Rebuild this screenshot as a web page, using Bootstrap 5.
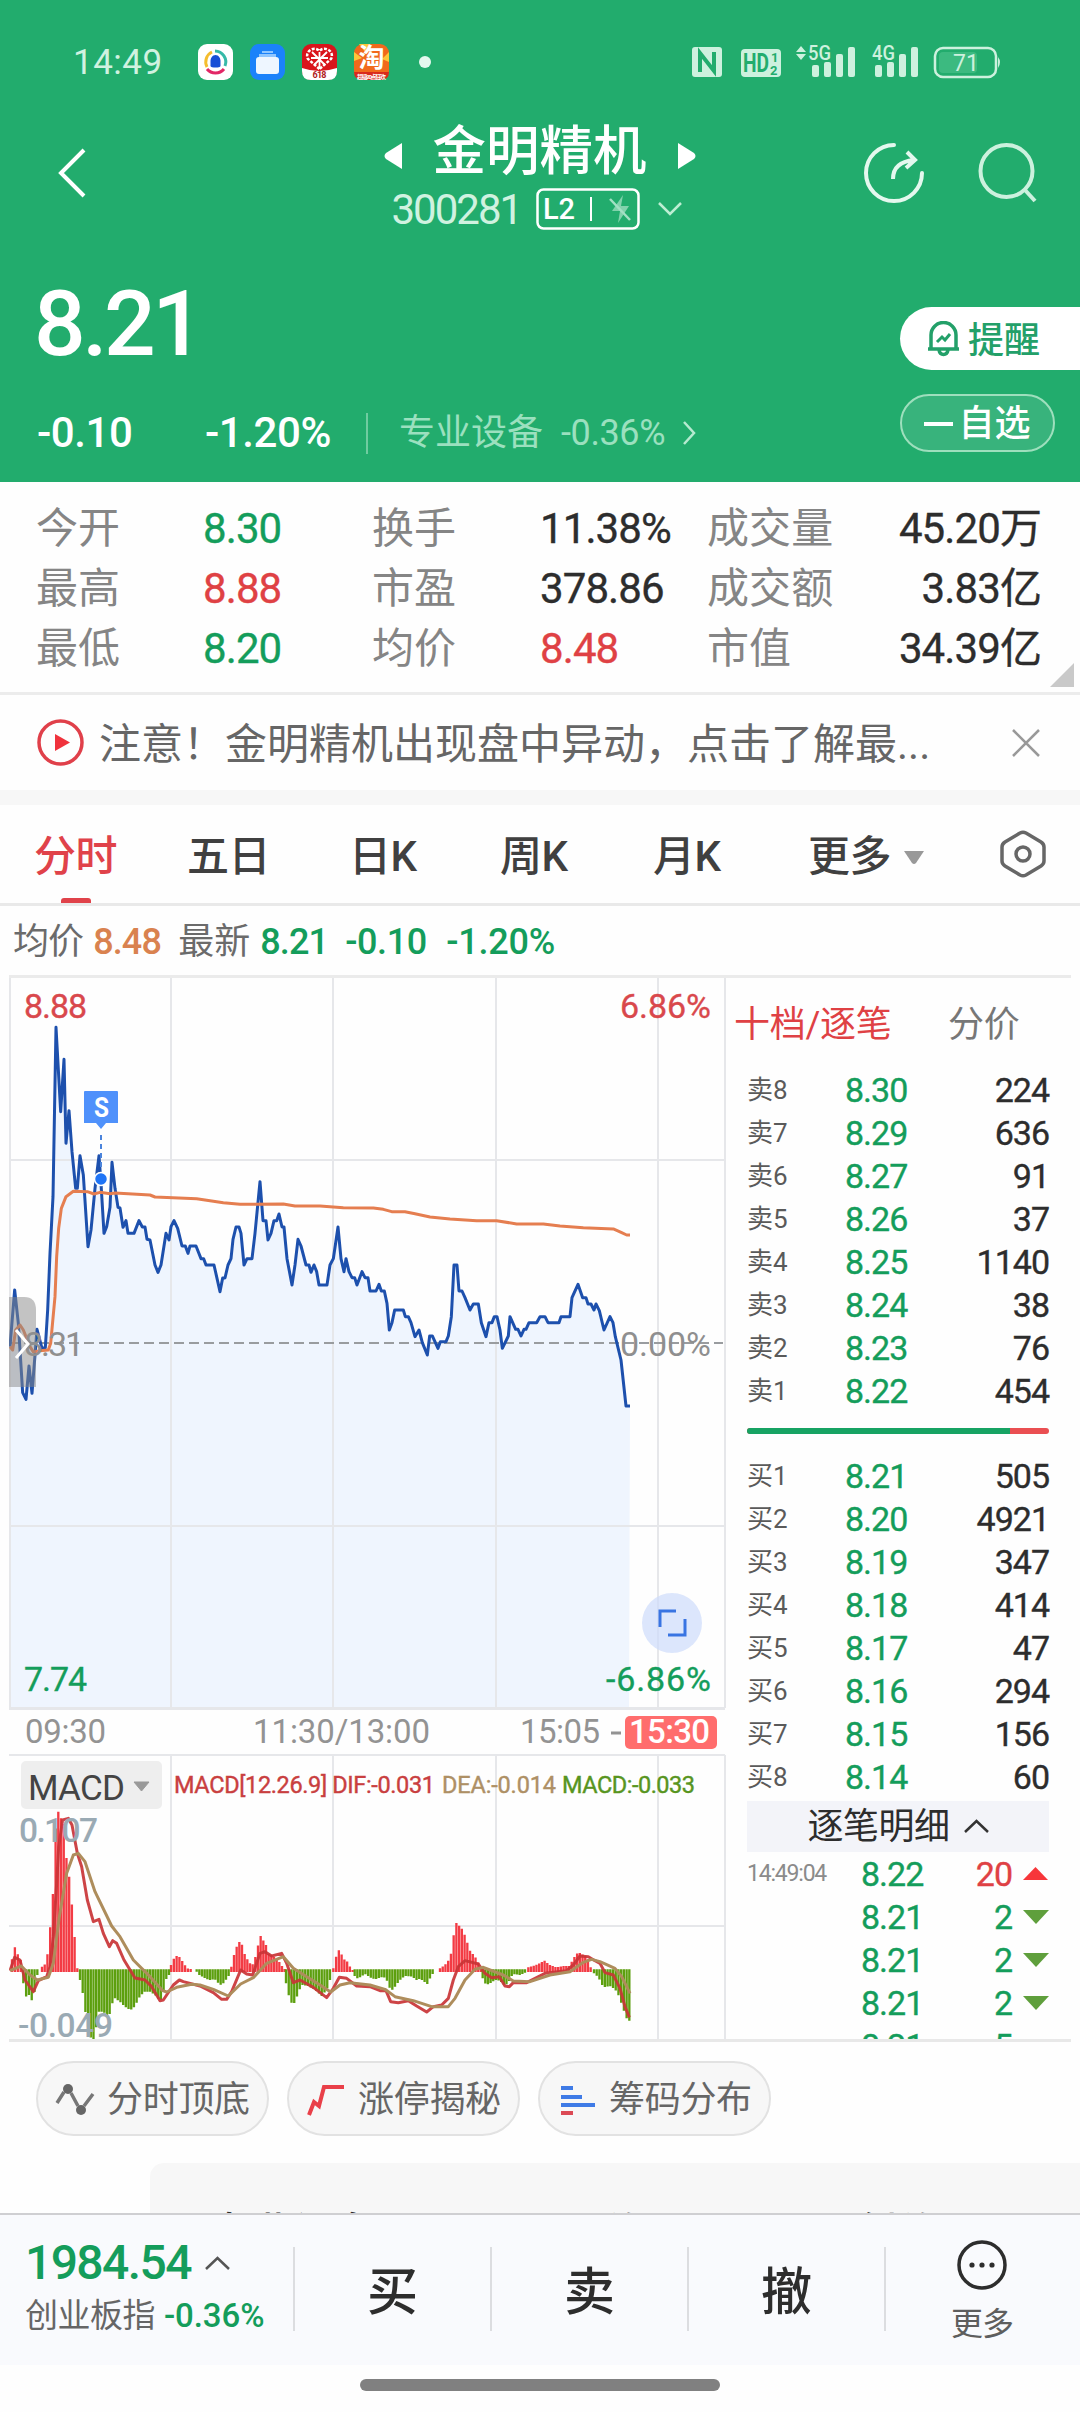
<!DOCTYPE html>
<html lang="zh-CN">
<head>
<meta charset="utf-8">
<meta name="viewport" content="width=device-width, initial-scale=1">
<title>金明精机 300281</title>
<link rel="stylesheet" href="https://cdn.jsdelivr.net/npm/bootstrap@5.3.0/dist/css/bootstrap.min.css">
<style>
body{width:1080px;height:2412px;overflow:hidden;background:#fefefe;font-family:Roboto,"Noto Sans CJK SC",sans-serif;color:#2d2d2d;line-height:1;letter-spacing:-1px}
svg{display:block;flex:none}
svg text{font-family:Roboto,"Noto Sans CJK SC",sans-serif;letter-spacing:0}
.cjk{letter-spacing:0}
.up{color:#df4144}.down{color:#149d5b}
.quote-head{height:482px;background:#22ac6d;color:#fff}
.status{height:100px;padding:24px 78px 0 73px}
.status .clock{font-size:35px;width:93px;color:#d0f2e0;letter-spacing:.5px}
.title-row{height:150px;padding:0 42px 0 56px}
.stock-name{font-size:53.5px;letter-spacing:0;line-height:54px;font-weight:500}
.stock-code{font-size:42px;letter-spacing:-2px;color:#d0f2e0}
.price-row{height:232px;padding-left:37px}
.big-price{font-size:91px;letter-spacing:-3.5px;font-weight:500;line-height:90px;padding-top:29px;margin-left:-3px}
.chg{font-size:42px;letter-spacing:-.4px;font-weight:500}
.sector{color:#9be0bf;font-size:36px}
.vline{width:2px;height:41px;background:#6fcca0}
.pill-alert{width:180px;height:63px;margin-top:57px;border-radius:32px 0 0 32px;background:#fff;color:#23a069;font-size:36px;padding-left:27px;font-weight:500}
.pill-own{width:155px;height:58px;margin-top:24px;border-radius:29px;border:2px solid #9edfbd;background:#38b37c;font-size:36px;font-weight:500;padding-top:2px}
.stats{height:210px;padding:17px 38px 0 36px}
.stat-grid{display:grid;grid-template-columns:167px 169px 168px 167px 334px;grid-auto-rows:60px;align-items:center;font-size:42px}
.stat-grid b{font-weight:400;letter-spacing:-.9px;font-size:42px;-webkit-text-stroke:.35px currentColor}
.stat-grid .name{color:#858585;letter-spacing:.1px}
.corner{right:6px;bottom:5px;width:24px;height:24px;background:#c9c9c9;clip-path:polygon(100% 0,100% 100%,0 100%)}
.notice{height:98px;border-top:3px solid #ececec;padding:0 40px 0 37px;color:#666;font-size:42px;letter-spacing:0}
.tabs{height:101px;border-bottom:3px solid #e9e9e9;font-size:42px;color:#404040;padding:6px 34px 0 34px}
.tabs .tab{letter-spacing:-.5px;height:92px;display:flex;align-items:center;font-weight:500}
.tabs .on{color:#e0424a}
.tabs .on::after{content:"";position:absolute;left:27px;bottom:0;width:30px;height:5px;border-radius:3px 3px 0 0;background:#e0424a}
.legend-row{height:69px;padding:2px 0 0 13px;font-size:36px;color:#6b6b6b;letter-spacing:-.9px}
.legend-row span+span{margin-left:10px}
.main-area{height:1067px;margin-left:9px;width:1062px;border-top:3px solid #ebebeb;border-bottom:3px solid #e8e8e8}
.charts{width:717px}
.book{width:345px;overflow:hidden;padding:0 22px 0 21px}
.book-tabs{height:93px;margin-left:-13px;font-size:36px;letter-spacing:-.3px}
.bk{height:43px;font-size:34px;font-weight:400;-webkit-text-stroke:.35px currentColor}
.bk .lv{width:98px;font-size:26px;color:#5a5a5a;letter-spacing:0;-webkit-text-stroke:0}
.bk .px{width:80px}
.bk .tm{width:114px;font-size:23px;color:#8b8b8b;letter-spacing:-1.2px;-webkit-text-stroke:0}
.ratio{height:6px;border-radius:3px;overflow:hidden;background:#ea4f52}
.ratio i{display:block;height:100%;background:#17a363}
.detail-head{height:51px;background:#f3f4f9;font-size:36px;letter-spacing:-.5px}
.chips{height:121px;padding:19px 36px 0;gap:18px}
.chip{width:233px;height:75px;border-radius:38px;border:2px solid #e2e2e2;background:#f7f7f7;font-size:36px;color:#666;padding:2px 0 0 17px;letter-spacing:-.3px}
.peek{height:50px;margin-left:150px;background:#f7f7f7;border-radius:14px 0 0 0;overflow:hidden;font-size:42px;letter-spacing:0;font-weight:500;padding:46px 0 0 60px;line-height:50px}
.trade-bar{height:152px;background:#f9fafd;border-top:2px solid #cfcfd2}
.index-box{width:293px;padding:24px 0 0 25px}
.deal{width:197px;height:84px;border-left:2px solid #dcdde0;font-size:51px;letter-spacing:0;font-weight:500;padding-top:7px}
.more-box{width:194px;height:84px;border-left:2px solid #dcdde0;font-size:32px;color:#5e5e5e}
.home{height:40px}
.home i{width:360px;height:12px;border-radius:6px;background:#808080}
</style>
</head>
<body>
<header class="quote-head">
 <div class="status d-flex align-items-center">
  <span class="clock">14:49</span>
  <div class="d-flex ms-4 ps-2" style="gap:17px">
   <svg width="35" height="36" viewBox="0 0 35 36"><rect width="35" height="36" rx="9" fill="#fff"/><g fill="none" stroke-width="3"><path d="M9 23a11 11 0 0 1 5-15" stroke="#f5bd2e"/><path d="M17 7a11 11 0 0 1 10 15" stroke="#36b9a8"/><path d="M9 25a11 11 0 0 0 17 0" stroke="#e22766"/></g><path d="M17.500 11c3 0 5 3 5 6v5c0 2-10 2-10 0v-5c0-3 2-6 5-6z" fill="#174fd6"/></svg>
   <svg width="35" height="36" viewBox="0 0 35 36"><rect width="35" height="36" rx="9" fill="#1b82fa"/><path d="M12 7h11v2H12zM9 10h17v3H9z" fill="#8fc6ff"/><rect x="6" y="13" width="23" height="17" rx="3" fill="#eef6ff"/></svg>
   <svg width="35" height="36" viewBox="0 0 35 36"><rect width="35" height="36" rx="9" fill="#d9141b"/><path d="M0 24q17 6 35 0v3q0 9-9 9H9q-9 0-9-9z" fill="#fff"/><path d="M17.500 25L6 15C2 8 12 1 17.500 7 23 1 33 8 29 15z" fill="none" stroke="#fff" stroke-width="2.500" stroke-dasharray="3 1.500"/><path d="M10 8l13 13M25 8L12 21M9 14h17M17.500 8v15" stroke="#fff" stroke-width="1.800"/><text x="10.500" y="34" font-size="9" font-weight="700" fill="#b01b1b" textLength="14">618</text></svg>
   <svg width="35" height="36" viewBox="0 0 35 36"><rect width="35" height="36" rx="9" fill="#f1691c"/><path d="M0 8l8 6-8 3zM35 8l-7 7 7 3zM5 0l6 8 5-8z" fill="#ffc53a"/><text x="4.500" y="22.500" font-size="26" font-weight="700" fill="#fff" textLength="26">淘</text><path d="M0 28h35q0 8-9 8H9q-9 0-9-8z" fill="#d92a1c"/><text x="3" y="34.500" font-size="6" font-weight="700" fill="#fff" textLength="29">超级20点狂欢</text></svg>
  </div>
  <svg class="ms-auto me-auto" width="12" height="12" style="transform:translateX(-116px)"><circle cx="6" cy="6" r="6" fill="#e4f8ee"/></svg>
  <svg width="310" height="40" viewBox="692 42 310 40" fill="#cdf1de">
   <rect x="692" y="47" width="30" height="30" rx="3"/><path d="M700 72V53l14 18V52" fill="none" stroke="#22ac6d" stroke-width="4"/>
   <rect x="741" y="49" width="40" height="28" rx="4"/><text x="743" y="72" font-size="25" font-weight="700" fill="#22ac6d" textLength="26" lengthAdjust="spacingAndGlyphs">HD</text><text x="771" y="62" font-size="13" font-weight="700" fill="#22ac6d">1</text><text x="770" y="75" font-size="13" font-weight="700" fill="#22ac6d">2</text>
   <path d="M796 52l5-6 5 6zM796 54h10l-5 6z"/>
   <text x="808" y="60" font-size="20" font-weight="500" textLength="23" lengthAdjust="spacingAndGlyphs">5G</text>
   <text x="872" y="60" font-size="20" font-weight="500" textLength="23" lengthAdjust="spacingAndGlyphs">4G</text>
   <g id="sig"><rect x="812" y="65" width="7" height="12" rx="2"/><rect x="824" y="62" width="7" height="15" rx="2"/><rect x="836" y="54" width="7" height="23" rx="2"/><rect x="848" y="47" width="7" height="30" rx="2"/></g><use href="#sig" x="63"/>
   <rect x="935" y="48" width="61" height="29" rx="8" fill="none" stroke="#cdf1de" stroke-width="2.500"/><rect x="939" y="52" width="38" height="21" rx="4" fill="#3cba80"/><path d="M998 57q4 5 0 11z"/><text x="953" y="71" font-size="23" textLength="26">71</text>
  </svg>
 </div>
 <div class="title-row d-flex justify-content-between">
  <svg width="32" height="50" class="align-self-start" style="margin-top:48px"><path d="M28 2L5 25l23 23" fill="none" stroke="#fff" stroke-width="4"/></svg>
  <div style="width:312px;margin-left:127px;padding-top:25px">
   <div class="d-flex align-items-center justify-content-center">
    <svg width="19" height="28" style="margin-top:7px"><path d="M18 1v26L2 17q-3-3 0-6z" fill="#fff"/></svg>
    <span class="stock-name mx-auto">金明精机</span>
    <svg width="19" height="28" style="margin-top:7px"><path d="M1 1v26l16-10q3-3 0-6z" fill="#fff"/></svg>
   </div>
   <div class="d-flex align-items-center" style="margin:8px 0 0 8px">
    <span class="stock-code" style="width:144px;padding-top:2px">300281</span>
    <svg width="104" height="42" viewBox="0 0 104 42"><rect x="1.500" y="1.500" width="101" height="39" rx="6" fill="none" stroke="#fff" stroke-width="2.500"/><text x="7" y="31" font-size="29" font-weight="500" fill="#fff" textLength="32">L2</text><path d="M55 9v24" stroke="#fff" stroke-width="2"/><path d="M87 7L76 23h8l-2 12 11-17h-8z" fill="#82d2ac"/><path d="M74 11l20 21" stroke="#a3e0c4" stroke-width="2.500"/></svg>
    <svg width="26" height="16" style="margin-left:17px"><path d="M2 2l11 11L24 2" fill="none" stroke="#bdeed3" stroke-width="2.500"/></svg>
   </div>
  </div>
  <div class="d-flex" style="gap:54px;padding-top:43px">
   <svg width="60" height="60" fill="none" stroke="#e4f8ee" stroke-width="4"><path d="M30 2A28 28 0 1 0 58 30" stroke-linecap="round"/><path d="M29 36q0-17 21-19M43 9l8 8-9 8"/></svg>
   <svg width="60" height="60" fill="none" stroke="#ccf1de" stroke-width="4"><circle cx="28.500" cy="28" r="26"/><path d="M47 47l10 11"/></svg>
  </div>
 </div>
 <div class="price-row d-flex justify-content-between">
  <div>
   <div class="big-price">8.21</div>
   <div class="d-flex align-items-center" style="margin-top:43px">
    <span class="chg" style="width:168px">-0.10</span><span class="chg" style="width:161px">-1.20%</span>
    <i class="vline"></i>
    <span class="sector cjk text-nowrap" style="width:193px;padding-left:31px">专业设备</span>
    <span class="sector" style="width:121px;letter-spacing:-.4px">-0.36%</span>
    <svg width="14" height="26"><path d="M2 2l10 11L2 24" fill="none" stroke="#b6ead0" stroke-width="2.500"/></svg>
   </div>
  </div>
  <div>
   <div class="pill-alert d-flex align-items-center">
    <svg width="33" height="36" viewBox="0 0 33 36" fill="none" stroke="#23a069" stroke-width="3.500"><path d="M4 28V14a12.500 12.500 0 0 1 25 0v14M1 28h31M12 29c1 6 8 6 9 0"/><path d="M10 21l5-5 3 3 5-6" stroke-width="3"/></svg>
    <span class="cjk ms-2 pt-1">提醒</span>
   </div>
   <div class="pill-own cjk d-flex align-items-center justify-content-center"><svg width="30" height="6" class="me-1"><path d="M0 3h29" stroke="#fff" stroke-width="4"/></svg>自选</div>
  </div>
 </div>
</header>

<section class="stats position-relative">
 <div class="stat-grid">
  <span class="name">今开</span><b class="down">8.30</b><span class="name">换手</span><b>11.38%</b><div class="d-flex justify-content-between"><span class="name">成交量</span><b>45.20万</b></div>
  <span class="name">最高</span><b class="up">8.88</b><span class="name">市盈</span><b>378.86</b><div class="d-flex justify-content-between"><span class="name">成交额</span><b>3.83亿</b></div>
  <span class="name">最低</span><b class="down">8.20</b><span class="name">均价</span><b class="up">8.48</b><div class="d-flex justify-content-between"><span class="name">市值</span><b>34.39亿</b></div>
 </div>
 <i class="corner position-absolute"></i>
</section>

<section class="notice d-flex align-items-center">
 <svg width="47" height="47" viewBox="0 0 47 47"><circle cx="23.500" cy="23.500" r="21.500" fill="none" stroke="#e0404a" stroke-width="3.500"/><path d="M18 15l15 8.500L18 32z" fill="#f0323c"/></svg>
 <span class="text-nowrap pt-1" style="margin-left:15px">注意！金明精机出现盘中异动，点击了解最...</span>
 <svg class="ms-auto" width="28" height="28"><path d="M1 1l26 26M27 1L1 27" stroke="#999" stroke-width="2.500"/></svg>
</section>
<div style="height:15px;background:#f7f7f7"></div>

<nav class="tabs d-flex">
 <div class="tab on position-relative" style="width:153px">分时</div><div class="tab" style="width:162px">五日</div><div class="tab" style="width:151px">日K</div><div class="tab" style="width:153px">周K</div><div class="tab" style="width:155px">月K</div>
 <div class="tab">更多<svg style="margin-left:12px" width="22" height="15"><path d="M1 1h20L13 13q-2 2-4 0z" fill="#999"/></svg></div>
 <div class="tab ms-auto"><svg width="46" height="48" viewBox="0 0 46 48" fill="none" stroke="#666" stroke-width="3.500" style="margin-top:-6px"><path d="M20 3q3-1.500 6 0l15 9q3 2 3 5v14q0 3-3 5l-15 9q-3 1.500-6 0L5 36q-3-2-3-5V17q0-3 3-5z"/><circle cx="23" cy="24" r="7"/></svg></div>
</nav>

<div class="legend-row d-flex align-items-center">
 <span>均价</span><span style="color:#d9824f;width:75px;font-weight:500">8.48</span><span class="cjk">最新</span><span class="down" style="font-weight:500;width:75px">8.21</span><span class="down" style="font-weight:500;width:91px;letter-spacing:-.4px">-0.10</span><span class="down" style="font-weight:500;letter-spacing:-.2px">-1.20%</span>
</div>

<main class="main-area d-flex">
 <div class="charts">
  <svg width="717" height="1061" viewBox="9 978 717 1061" id="chart">
   <g transform="translate(0 970) scale(.33333)">
    <path id="fill" fill="#eff5fe"/>
   </g>
   <g stroke="#e6e7ea" stroke-width="2" fill="none">
    <path d="M10 978V1708M171 978V1708M333 978V1708M496 978V1708M658 978V1708M725 978V1708M9 1160H725M9 1526H725"/>
    <path d="M9 1708.500H725" stroke-width="3"/><path d="M9 1755H725M9 1926H725M171 1755V2042M333 1755V2042M496 1755V2042M658 1755V2042M725 1755V2042"/>
   </g>
   <path d="M9 1343H723" stroke="#999c9f" stroke-width="2" stroke-dasharray="10 5"/>
   <g transform="translate(0 970) scale(.33333)" fill="none" stroke-linejoin="round">
    <path id="price" stroke="#1d50ad" stroke-width="9"/>
    <path d="M30 1130L38 1140 47 1080 60 1065 70 1080 90 1130 100 1146 120 1142 145 1140 152 1120 165 980 170 860 176 775 184 715 198 680 220 664 262 665 282 672 300 667 330 671 345 669 450 675 465 681 590 686 670 698 720 703 850 702 885 708 960 708 1030 713 1120 714 1150 718 1175 725 1215 725 1245 731 1290 741 1350 747 1430 752 1490 752 1550 762 1630 762 1680 768 1750 773 1840 777 1865 788 1880 795 1890 795" stroke="#e57e50" stroke-width="9"/>
   </g>
   <path d="M9 1297h15q12 0 12 13v77H9z" fill="#888" fill-opacity=".5"/>
   <path d="M101 1135V1170" stroke="#4b84dc" stroke-width="2" stroke-dasharray="5 4"/>
   <circle cx="101" cy="1179" r="6.500" fill="#1f74f6" stroke="#fff" stroke-width="1.500"/>
   <path d="M85 1091h32q1 0 1 1v31h-12l-5 6-5-6H84v-31q0-1 1-1z" fill="#4f91fb"/>
   <text x="94" y="1117" font-size="28" font-weight="700" fill="#fff" textLength="15" lengthAdjust="spacingAndGlyphs">S</text>
   <g font-size="34" stroke-width=".35">
    <text x="24" y="1018" fill="#d9484c" stroke="#d9484c" textLength="63">8.88</text><text x="620" y="1018" fill="#d9484c" stroke="#d9484c" textLength="91">6.86%</text>
    <g fill="#8f8f8f"><text x="24" y="1356" textLength="60">8.31</text><text x="620" y="1356" textLength="91">0.00%</text></g>
    <text x="24" y="1691" fill="#149d5b" stroke="#149d5b" textLength="63">7.74</text><text x="606" y="1691" fill="#149d5b" stroke="#149d5b" textLength="105">-6.86%</text>
   </g>
   <path d="M16 1330l12 14-12 14" fill="none" stroke="#fff" stroke-width="3"/>
   <circle cx="672" cy="1623" r="30" fill="#cddcfb" fill-opacity=".7"/>
   <path d="M660 1627v-16h16M668 1635h17v-16" fill="none" stroke="#3974e2" stroke-width="3"/>
   <g font-size="33" fill="#939393"><text x="25" y="1743" textLength="81">09:30</text><text x="253" y="1743" textLength="177">11:30/13:00</text><text x="520" y="1743" textLength="80">15:05</text><path d="M611 1733h10" stroke="#939393" stroke-width="3"/></g>
   <rect x="625" y="1716" width="92" height="33" rx="5" fill="#ff6d6d"/><text x="629" y="1743" font-size="33" font-weight="500" fill="#fff" textLength="81">15:30</text>
   <g transform="translate(0 1750) scale(.33333)" fill="none" stroke-linejoin="round">
    <g id="bars"></g>
    <path d="M30 662L44 622 60 630 75 690 100 725 115 692 140 680 150 650 160 560 170 400 176 290 188 210 205 205 216 225 232 310 245 350 262 450 280 515 297 508 310 550 328 590 338 572 350 580 372 630 405 684 435 690 455 710 480 752 490 750 500 735 520 705 538 690 550 695 600 708 640 728 665 748 680 748 695 725 722 660 740 672 758 675 780 610 795 605 815 618 845 610 860 640 880 698 900 690 940 712 980 743 1000 715 1018 682 1040 685 1070 708 1110 710 1140 722 1158 722 1172 755 1195 758 1225 752 1250 768 1280 786 1300 770 1325 765 1345 745 1360 690 1375 650 1395 632 1435 642 1455 670 1475 683 1498 680 1515 708 1528 710 1540 698 1580 698 1635 670 1700 662 1720 645 1740 618 1765 620 1785 632 1800 640 1815 668 1840 675 1860 715 1875 770 1888 802" stroke="#c93436" stroke-opacity=".92" stroke-width="9"/>
    <path d="M30 662L64 648 90 675 112 690 145 682 160 640 178 500 200 370 220 315 235 310 255 335 285 425 335 528 360 560 400 630 450 680 488 722 500 726 530 712 575 703 600 705 640 718 685 738 722 702 760 683 800 640 850 620 880 655 920 680 960 705 992 726 1020 705 1050 698 1110 705 1155 718 1185 740 1240 752 1295 770 1345 770 1365 745 1395 690 1425 658 1450 652 1510 675 1540 693 1590 695 1650 675 1710 665 1750 637 1775 628 1800 635 1845 655 1865 680 1890 730" stroke="#ae8d5c" stroke-width="9"/>
   </g>
   <rect x="21" y="1761" width="141" height="48" rx="5" fill="#eee"/>
   <text x="28" y="1800" font-size="35" fill="#444" textLength="97">MACD</text><path d="M134 1782h15l-7.500 9z" fill="#999" stroke="#999"/>
   <g font-size="23.500" stroke-width=".4"><text x="174" y="1793" fill="#c93f40" stroke="#c93f40" textLength="261">MACD[12.26.9] DIF:-0.031</text><text x="442" y="1793" fill="#ae9065" stroke="#ae9065" textLength="114">DEA:-0.014</text><text x="562" y="1793" fill="#58951f" stroke="#58951f" textLength="133">MACD:-0.033</text></g>
   <g font-size="33.500" font-weight="500" fill="#9aaab4"><text x="19" y="1842" textLength="79">0.107</text><text x="18" y="2037" textLength="95">-0.049</text></g>
  </svg>
 </div>
 <aside class="book">
  <div class="book-tabs d-flex align-items-center"><span class="up" style="width:214px">十档/逐笔</span><span style="color:#777">分价</span></div>
  <div id="asks" style="margin-top:-3px"></div>
  <div class="ratio" style="margin:16px 0 20px"><i style="width:87%"></i></div>
  <div id="bids"></div>
  <div class="detail-head d-flex align-items-center justify-content-center" style="margin-top:3px"><span>逐笔明细</span><svg style="margin-left:14px" width="25" height="15"><path d="M1 13L12.500 2 24 13" fill="none" stroke="#333" stroke-width="2.500"/></svg></div>
  <div id="ticks"></div>
 </aside>
</main>

<div class="chips d-flex">
 <div class="chip d-flex align-items-center"><svg width="40" height="36" viewBox="0 0 40 36"><path d="M2 21L9 10M16 11l7 13M29 24l9-12" fill="none" stroke="#777" stroke-width="3.500"/><circle cx="13" cy="7" r="5" fill="#666"/><circle cx="26" cy="28" r="5" fill="#666"/></svg><span style="margin-left:12px">分时顶底</span></div>
 <div class="chip d-flex align-items-center"><svg width="40" height="36" viewBox="0 0 40 36"><path d="M3 33l5-13 5 4L18 5h20" fill="none" stroke="#e94049" stroke-width="4"/></svg><span style="margin-left:12px">涨停揭秘</span></div>
 <div class="chip d-flex align-items-center"><svg width="40" height="36" viewBox="0 0 40 36" stroke-width="4"><path d="M4 6h12M4 15h21M4 23h34" stroke="#3f7be6"/><path d="M4 31h12" stroke="#dc4a55"/></svg><span style="margin-left:12px">筹码分布</span></div>
</div>
<div class="peek d-flex"><span style="width:393px">专业设备</span><span style="width:252px">价</span><span>创价</span></div>

<footer>
 <div class="trade-bar d-flex">
  <div class="index-box">
   <div class="d-flex align-items-center down" style="font-size:48px;letter-spacing:-1.6px;font-weight:500"><span style="width:180px">1984.54</span><svg width="25" height="15"><path d="M1 13L12.500 2 24 13" fill="none" stroke="#555" stroke-width="2.500"/></svg></div>
   <div class="d-flex" style="font-size:33px;color:#666;margin-top:12px"><span class="cjk" style="letter-spacing:-.5px">创业板指</span><span class="down" style="font-weight:500;margin-left:9px;letter-spacing:-.1px">-0.36%</span></div>
  </div>
  <div class="d-flex" style="padding-top:32px">
   <div class="deal d-flex align-items-center justify-content-center">买</div><div class="deal d-flex align-items-center justify-content-center">卖</div><div class="deal d-flex align-items-center justify-content-center">撤</div>
   <div class="more-box d-flex flex-column align-items-center"><svg width="50" height="50" viewBox="0 0 50 50" style="margin-top:-7px"><circle cx="25" cy="25" r="23" fill="none" stroke="#2d2d2d" stroke-width="3.500"/><g fill="#2d2d2d"><circle cx="15" cy="25" r="2.600"/><circle cx="25" cy="25" r="2.600"/><circle cx="35" cy="25" r="2.600"/></g></svg><span style="margin-top:18px">更多</span></div>
  </div>
 </div>
 <div class="home d-flex justify-content-center align-items-center"><i></i></div>
</footer>
<script src="https://cdn.jsdelivr.net/npm/bootstrap@5.3.0/dist/js/bootstrap.bundle.min.js"></script>
<script>
// Intraday price line
const line = "30 1130 44 960 55 1060 68 1268 78 1288 87 1188 96 1270 111 1078 126 1135 136 1133 143 1020 150 850 159 680 168 172 182 425 192 268 198 520 207 422 216 545 227 655 232 655 240 557 250 615 264 830 273 780 285 655 297 557 303 640 312 790 320 770 330 712 336 577 345 655 354 712 360 714 369 772 378 752 384 790 402 790 417 752 427 771 435 771 441 808 450 810 465 885 474 907 483 885 498 790 507 810 513 770 522 752 533 775 546 828 556 828 564 850 570 828 588 828 603 866 611 866 618 885 642 885 660 965 668 924 675 924 684 885 693 866 699 808 708 771 717 771 723 790 732 885 741 866 756 866 765 790 780 635 789 752 798 752 804 810 813 790 822 752 830 752 837 732 846 771 852 771 861 866 876 945 885 885 894 808 903 828 918 885 927 885 933 907 942 885 950 905 957 945 981 945 990 885 1000 866 1014 771 1023 866 1032 905 1038 866 1047 905 1056 923 1064 923 1071 945 1086 905 1095 923 1104 923 1110 963 1128 963 1137 943 1144 963 1153 963 1161 1000 1168 1080 1176 1058 1184 1020 1210 1020 1216 1040 1225 1040 1233 1058 1245 1100 1257 1080 1267 1118 1282 1155 1289 1098 1297 1098 1314 1135 1321 1115 1338 1115 1345 1098 1354 1040 1362 885 1371 885 1377 963 1386 963 1395 983 1410 1020 1420 1002 1435 1002 1444 1058 1458 1100 1467 1058 1476 1058 1483 1040 1491 1040 1500 1080 1507 1135 1525 1098 1530 1040 1547 1078 1554 1078 1563 1098 1572 1078 1578 1078 1587 1058 1610 1058 1620 1040 1635 1040 1644 1058 1677 1058 1683 1040 1710 1040 1716 983 1734 943 1748 983 1758 983 1764 1002 1773 1002 1782 1020 1788 1002 1798 1022 1812 1080 1830 1040 1839 1058 1846 1100 1863 1170 1878 1308 1890 1308";
document.getElementById('price').setAttribute('d', 'M' + line);
document.getElementById('fill').setAttribute('d', 'M' + line + 'L1887 2214 30 2214z');

// MACD histogram: [x, tip] runs, one bar every 8.15 units
const runs = [
 [36,628,44,590,53,612,62,630],[70,700,78,740,87,735,96,752,104,725,112,675],
 [126,650,135,643,143,610,150,537,158,447,167,230,174,183,182,205,190,205,198,315,207,375,216,467,225,575,232,655],
 [240,690,248,728,256,785,266,840,275,872,282,870,288,835,296,785,305,785,316,790,322,800,331,790,338,755,345,745,360,755,372,768,390,780,400,775,408,762,416,745,432,725,450,725,465,735,480,752,488,742,497,690,507,675],
 [513,645,522,625,531,617,540,622,552,642,562,655,572,657],[590,665,598,675,616,685,627,690,645,688,660,705,668,702,676,692,686,678],
 [694,650,700,622,708,595,716,576,724,576,732,608,740,625,750,640,758,643,765,625,772,597,780,555,789,570,798,585,806,612,815,615,835,632,846,648,854,657],
 [858,700,866,735,876,762,885,758,894,730,905,705,925,708,945,720,965,738,980,720,990,690],
 [1000,655,1006,630,1014,597,1023,610,1032,628,1040,632,1050,650,1058,660],
 [1064,678,1072,685,1080,682,1095,672,1110,682,1125,688,1150,680,1160,690,1168,712,1176,720,1185,710,1200,690,1215,678,1235,680,1250,690,1260,686,1282,702,1290,685,1298,672],
 [1320,655,1335,645,1346,630,1354,608,1362,548,1370,516,1378,528,1386,537,1395,557,1402,578,1410,602,1425,620,1435,638,1443,652],
 [1448,685,1458,705,1470,700,1485,690,1500,692,1515,708,1530,690,1538,672,1560,675,1575,668],
 [1585,652,1600,648,1615,642,1633,632,1650,645,1670,652,1690,648,1710,648,1718,628,1735,606,1750,615,1762,622,1772,652],
 [1782,670,1795,682,1810,712,1830,708,1845,718,1855,735,1868,770,1878,803,1888,812]];
let up = '', dn = '';
for (const r of runs) {
  const n = Math.max(1, Math.round((r[r.length-2] - r[0]) / 8.15)), step = (r[r.length-2] - r[0]) / n;
  for (let i = 0; i <= n; i++) {
    const x = r[0] + i * step; let k = 0;
    while (k < r.length - 4 && r[k+2] < x) k += 2;
    const y = r[k+1] + (r[k+3] - r[k+1]) * (x - r[k]) / (r[k+2] - r[k]);
    if (r[1] < 662) up += `M${x} 666V${y}`; else dn += `M${x} 658V${y}`;
  }
}
document.getElementById('bars').innerHTML = `<path d="${up}" stroke="#f33b44" stroke-width="7"/><path d="${dn}" stroke="#5c9f0e" stroke-width="7"/>`;

// Order book
const row = (side, d) => d.map(([l, p, q]) => `<div class="bk d-flex align-items-center"><span class="lv">${side}${l}</span><span class="px down">${p}</span><span class="ms-auto">${q}</span></div>`).join('');
document.getElementById('asks').innerHTML = row('卖', [[8,'8.30',224],[7,'8.29',636],[6,'8.27',91],[5,'8.26',37],[4,'8.25',1140],[3,'8.24',38],[2,'8.23',76],[1,'8.22',454]]);
document.getElementById('bids').innerHTML = row('买', [[1,'8.21',505],[2,'8.20',4921],[3,'8.19',347],[4,'8.18',414],[5,'8.17',47],[6,'8.16',294],[7,'8.15',156],[8,'8.14',60]]);
document.getElementById('ticks').innerHTML = [['14:49:04','8.22',20,1],['','8.21',2],['','8.21',2],['','8.21',2],['','8.21',5]].map(([t, p, q, u]) =>
 `<div class="bk d-flex align-items-center"><span class="tm">${t}</span><span class="px down">${p}</span><span class="ms-auto ${u ? 'up' : 'down'}">${q}</span><svg width="26" height="14" style="margin-left:11px"><path d="${u ? 'M0 13L12.500 0 25 13z' : 'M0 0h26L13 14z'}" fill="${u ? '#f7363a' : '#5f9f3c'}"/></svg></div>`).join('');
</script>
</body>
</html>
